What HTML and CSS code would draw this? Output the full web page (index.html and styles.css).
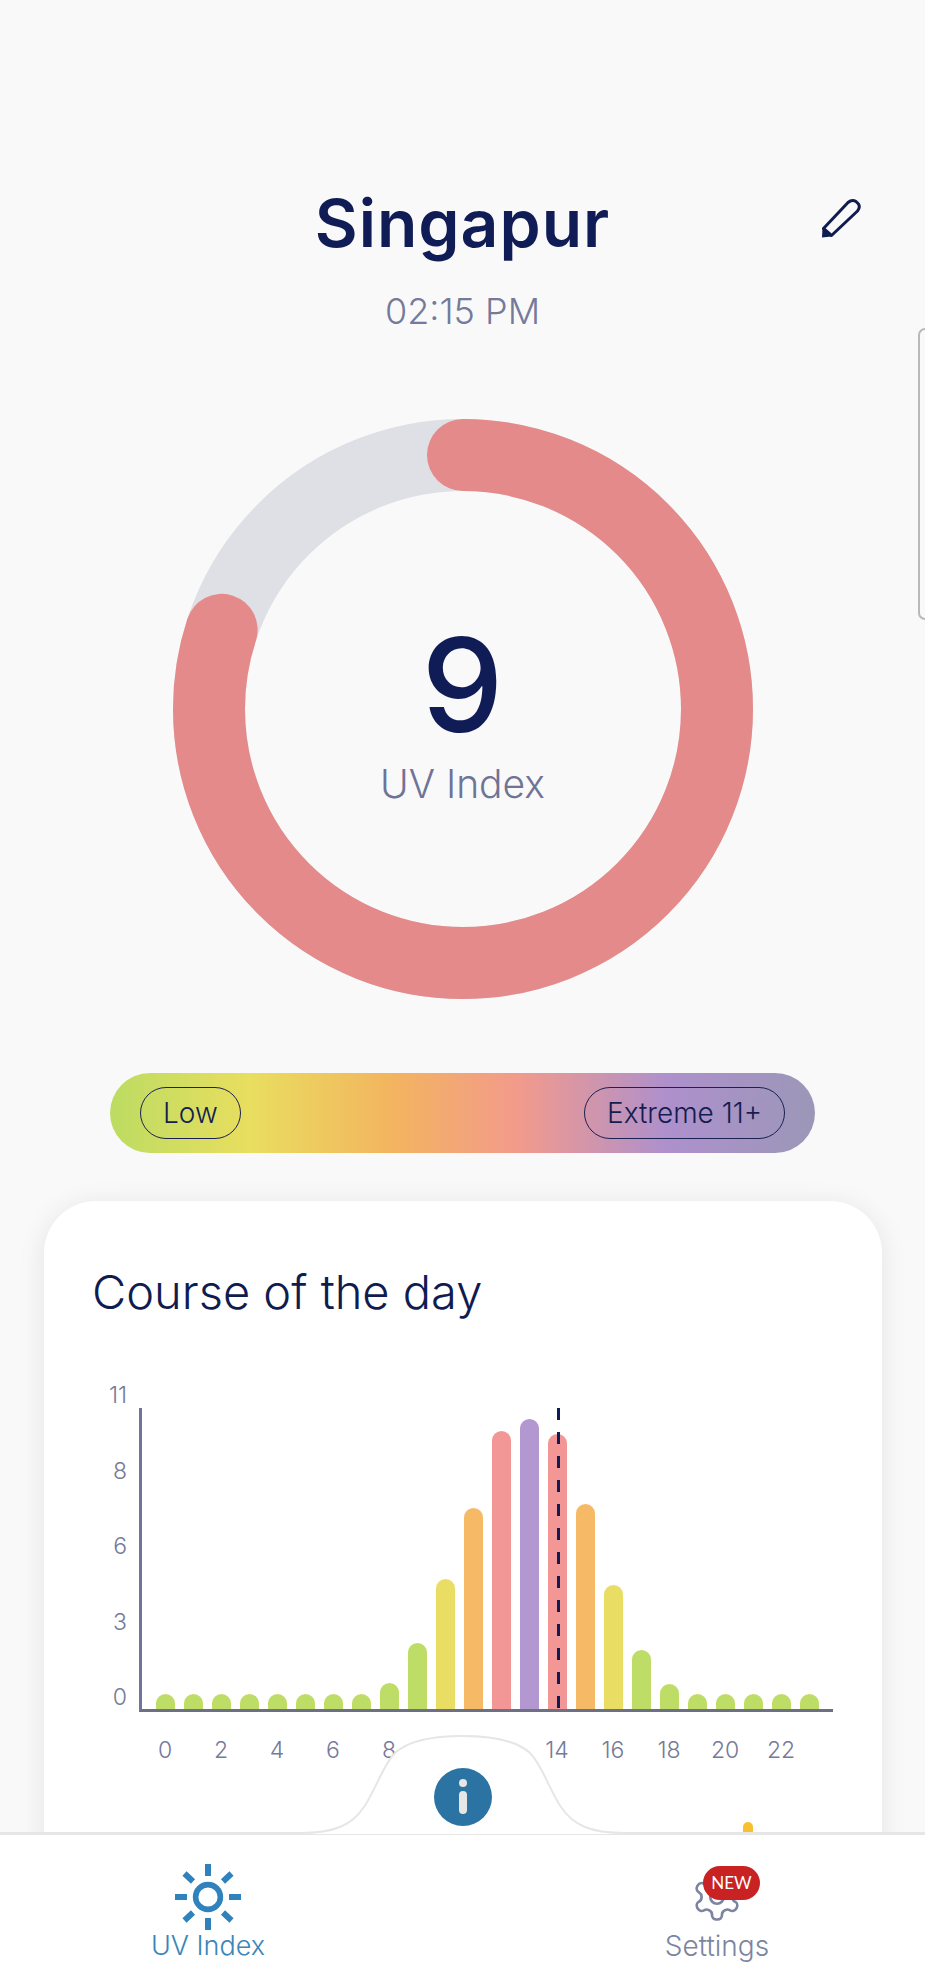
FILE: index.html
```html
<!DOCTYPE html>
<html lang="en">
<head>
  <meta charset="UTF-8">
  <meta name="viewport" content="width=device-width, initial-scale=1">
  <title>UV Index - Singapur</title>
  <link rel="stylesheet" href="styles.css">
</head>
<body>
  <div class="edge-handle"></div>

  <main class="screen">
    <header class="location">
      <h1 class="city">Singapur</h1>
      <svg class="edit-icon" viewBox="0 0 40 40" aria-hidden="true">
        <path class="pencil-body" d="M2.5 30.5 L27 4.5 Q31 1 35 3.5 L37.5 6 Q39.5 9.5 36.5 13 L10.5 37.5 Z"/>
        <path class="pencil-tip" d="M1.5 30 L10.5 38.5 L1 39.5 Z"/>
      </svg>
      <p class="time">02:15 PM</p>
    </header>

    <!-- main gauge, 9 of 11 -->
    <section class="gauge">
      <svg class="gauge-ring" viewBox="0 0 582 582" aria-hidden="true">
        <circle class="gauge-track" cx="291" cy="291" r="254"/>
        <circle class="gauge-value" cx="291" cy="291" r="254"/>
      </svg>
      <div class="gauge-label">
        <span class="gauge-number">9</span>
        <span class="gauge-caption">UV Index</span>
      </div>
    </section>

    <section class="scale">
      <span class="scale-pill">Low</span>
      <span class="scale-pill">Extreme 11+</span>
    </section>

    <section class="card">
      <h2 class="card-title">Course of the day</h2>

      <div class="chart">
        <div class="y-labels">
          <span>11</span><span>8</span><span>6</span><span>3</span><span>0</span>
        </div>
        <div class="plot">
          <div class="bar green" style="height:15px"></div>
          <div class="bar green" style="height:15px"></div>
          <div class="bar green" style="height:15px"></div>
          <div class="bar green" style="height:15px"></div>
          <div class="bar green" style="height:15px"></div>
          <div class="bar green" style="height:15px"></div>
          <div class="bar green" style="height:15px"></div>
          <div class="bar green" style="height:15px"></div>
          <div class="bar green" style="height:26px"></div>
          <div class="bar green" style="height:66px"></div>
          <div class="bar yellow" style="height:130px"></div>
          <div class="bar orange" style="height:201px"></div>
          <div class="bar pink" style="height:278px"></div>
          <div class="bar purple" style="height:290px"></div>
          <div class="bar pink" style="height:275px"></div>
          <div class="bar orange" style="height:205px"></div>
          <div class="bar yellow" style="height:124px"></div>
          <div class="bar green" style="height:59px"></div>
          <div class="bar green" style="height:25px"></div>
          <div class="bar green" style="height:15px"></div>
          <div class="bar green" style="height:15px"></div>
          <div class="bar green" style="height:15px"></div>
          <div class="bar green" style="height:15px"></div>
          <div class="bar green" style="height:15px"></div>
          <div class="now-line"></div>
        </div>
      </div>

      <div class="x-labels">
        <span>0</span><span>2</span><span>4</span><span>6</span><span>8</span><span>10</span>
        <span>12</span><span>14</span><span>16</span><span>18</span><span>20</span><span>22</span>
      </div>

      <div class="sun-bar"></div>
    </section>
  </main>

  <nav class="tabbar">
    <svg class="tabbar-bump" viewBox="0 0 925 100" aria-hidden="true">
      <path d="M-2 98 H300 C335 98 352 90 364 72 C376 54 383 30 395 18 C408 6 430 1 462.5 1 C495 1 517 6 530 18 C542 30 549 54 561 72 C573 90 590 98 625 98 H927 V100 H-2 Z"/>
    </svg>

    <button class="info-btn" aria-label="Info">
      <span class="info-dot"></span>
      <span class="info-stem"></span>
    </button>

    <a class="tab active">
      <svg class="tab-icon" viewBox="0 0 68 68" aria-hidden="true">
        <circle class="sun-core" cx="34" cy="34" r="12.4"/>
        <path class="sun-rays" d="M34 1 V13 M34 55 V67 M1 34 H13 M55 34 H67 M10.5 10.5 L19 18.5 M49 18.5 L57.5 10.5 M10.5 57.5 L19 49.5 M49 49.5 L57.5 57.5"/>
      </svg>
      <span class="tab-label">UV Index</span>
    </a>

    <a class="tab">
      <span class="tab-icon-wrap">
        <svg class="tab-icon gear" viewBox="0 0 24 24" aria-hidden="true">
          <path d="M12.22 2h-.44a2 2 0 0 0-2 2v.18a2 2 0 0 1-1 1.73l-.43.25a2 2 0 0 1-2 0l-.15-.08a2 2 0 0 0-2.73.73l-.22.38a2 2 0 0 0 .73 2.73l.15.1a2 2 0 0 1 1 1.72v.51a2 2 0 0 1-1 1.74l-.15.09a2 2 0 0 0-.73 2.73l.22.38a2 2 0 0 0 2.73.73l.15-.08a2 2 0 0 1 2 0l.43.25a2 2 0 0 1 1 1.73V20a2 2 0 0 0 2 2h.44a2 2 0 0 0 2-2v-.18a2 2 0 0 1 1-1.73l.43-.25a2 2 0 0 1 2 0l.15.08a2 2 0 0 0 2.73-.73l.22-.39a2 2 0 0 0-.73-2.73l-.15-.08a2 2 0 0 1-1-1.74v-.5a2 2 0 0 1 1-1.74l.15-.09a2 2 0 0 0 .73-2.73l-.22-.38a2 2 0 0 0-2.73-.73l-.15.08a2 2 0 0 1-2 0l-.43-.25a2 2 0 0 1-1-1.73V4a2 2 0 0 0-2-2z"/>
          <circle cx="12" cy="12" r="3"/>
        </svg>
        <span class="badge">NEW</span>
      </span>
      <span class="tab-label">Settings</span>
    </a>
  </nav>
</body>
</html>
```

FILE: styles.css
```css
* {
  margin: 0;
  padding: 0;
  box-sizing: border-box;
  font-family: 'Inter', 'Liberation Sans', sans-serif;
}

body {
  position: relative;
  width: 925px;
  height: 1988px;
  overflow: hidden;
  background-color: #f9f9f9;
}

.edge-handle {
  position: absolute;
  top: 328px;
  right: 0;
  width: 7px;
  height: 292px;
  border: 2px solid #b9b9b9;
  border-right: none;
  border-radius: 8px 0 0 8px;
}

.screen {
  padding-top: 186px;
}

/* header */
.location {
  display: grid;
  grid-template-columns: 1fr auto 1fr;
  align-items: center;
}

.city {
  grid-column: 2;
  font-size: 66px;
  line-height: 74px;
  font-weight: 600;
  letter-spacing: 1px;
  color: #101c55;
}

.edit-icon {
  justify-self: end;
  width: 40px;
  height: 40px;
  margin: 0 64px 10px 0;
}

.pencil-body {
  fill: none;
  stroke: #101c50;
  stroke-width: 3;
  stroke-linejoin: round;
}

.pencil-tip {
  fill: #101c50;
}

.time {
  grid-column: 1 / -1;
  margin-top: 29px;
  text-align: center;
  font-size: 36px;
  line-height: 44px;
  font-weight: 300;
  color: #757a99;
}

/* gauge */
.gauge {
  position: relative;
  width: 582px;
  height: 582px;
  margin: 85px auto 0;
}

.gauge-ring {
  display: block;
  width: 100%;
  height: 100%;
  transform: rotate(-90deg);
}

.gauge-track,
.gauge-value {
  fill: none;
  stroke-width: 72;
}

.gauge-track {
  stroke: #dfe0e6;
}

.gauge-value {
  stroke: #e48a8a;
  stroke-linecap: round;
  stroke-dasharray: 1277 1596;
}

.gauge-label {
  position: absolute;
  top: 212px;
  left: 0;
  width: 100%;
  display: flex;
  flex-direction: column;
  align-items: center;
}

.gauge-number {
  font-size: 130px;
  line-height: 110px;
  font-weight: 500;
  color: #101c55;
}

.gauge-caption {
  margin-top: 21px;
  font-size: 39px;
  line-height: 46px;
  font-weight: 300;
  color: #6f7396;
}

/* colour scale */
.scale {
  display: flex;
  justify-content: space-between;
  align-items: center;
  width: 705px;
  height: 80px;
  margin: 73px 0 0 110px;
  padding: 0 30px;
  border-radius: 40px;
  background: linear-gradient(90deg, #bcdc62 0%, #e9de5f 20%, #f3b45f 40%, #f29a8c 58%, #ae90cc 79%, #9b97b8 100%);
}

.scale-pill {
  display: flex;
  align-items: center;
  height: 52px;
  padding: 0 22px;
  border: 1.5px solid #1b2152;
  border-radius: 26px;
  font-size: 28px;
  font-weight: 300;
  color: #141d50;
}

/* chart card */
.card {
  width: 838px;
  height: 787px;
  margin: 48px 0 0 44px;
  padding: 61px 49px 0;
  border-radius: 52px;
  background-color: #fff;
  box-shadow: 0 4px 28px rgba(0, 0, 0, 0.09);
}

.card-title {
  margin-left: -1px;
  font-size: 47px;
  line-height: 60px;
  font-weight: 300;
  color: #101c50;
}

.chart {
  display: flex;
  gap: 12px;
  margin-top: 86px;
}

.y-labels {
  display: flex;
  flex-direction: column;
  justify-content: space-between;
  align-items: flex-end;
  width: 34px;
  height: 332px;
  margin-top: -28px;
  font-size: 23px;
  line-height: 30px;
  font-weight: 300;
  color: #757a99;
}

.plot {
  position: relative;
  display: grid;
  grid-template-columns: repeat(24, 28px);
  align-items: end;
  justify-items: center;
  width: 694px;
  height: 304px;
  padding-left: 9px;
  border-left: 3px solid #71739b;
  border-bottom: 3px solid #6d6f85;
}

.bar {
  width: 19px;
  border-radius: 10px 10px 0 0;
}

.green { background-color: #bedd66; }
.yellow { background-color: #e9de63; }
.orange { background-color: #f6b966; }
.pink { background-color: #f29696; }
.purple { background-color: #b297d0; }

/* dashed marker over the bar of the current hour */
.now-line {
  position: absolute;
  top: 0;
  bottom: 0;
  left: 415px;
  width: 3px;
  background: repeating-linear-gradient(180deg, #101c55 0, #101c55 12px, transparent 12px, transparent 24px);
}

.x-labels {
  display: flex;
  margin: 23px 0 0 58px;
  font-size: 23px;
  line-height: 30px;
  font-weight: 300;
  color: #757a99;
}

.x-labels span {
  width: 56px;
  padding-right: 28px;
  text-align: center;
  white-space: nowrap;
}

.sun-bar {
  width: 10px;
  height: 30px;
  margin: 57px 0 0 650px;
  border-radius: 5px 5px 0 0;
  background-color: #f8c02e;
}

/* bottom navigation */
.tabbar {
  position: absolute;
  left: 0;
  right: 0;
  bottom: 0;
  height: 155px;
  display: flex;
  justify-content: space-between;
  padding: 0 128px;
  background-color: #fff;
}

.tabbar-bump {
  position: absolute;
  top: -98px;
  left: 0;
  width: 925px;
  height: 100px;
}

.tabbar-bump path {
  fill: #fff;
  stroke: #e6e6e6;
  stroke-width: 2;
}

.info-btn {
  position: absolute;
  top: -65px;
  left: 434px;
  width: 58px;
  height: 58px;
  border: none;
  border-radius: 50%;
  background-color: #2b73a3;
}

.info-dot,
.info-stem {
  position: absolute;
  left: 25px;
  width: 8px;
  background-color: #e6e6e6;
}

.info-dot {
  top: 11px;
  height: 8px;
  border-radius: 50%;
}

.info-stem {
  top: 23px;
  height: 23px;
  border-radius: 4px;
}

.tab {
  display: flex;
  flex-direction: column;
  align-items: center;
  width: 160px;
  padding-top: 30px;
  font-size: 28px;
  line-height: 36px;
  font-weight: 300;
  color: #7d84a0;
}

.tab.active {
  font-size: 27px;
  color: #3a86b8;
}

.tab-label {
  margin-top: -3px;
}

.tab-icon {
  display: block;
  width: 68px;
  height: 68px;
}

.sun-core {
  fill: none;
  stroke: #2f82bb;
  stroke-width: 5.6;
}

.sun-rays {
  fill: none;
  stroke: #2f82bb;
  stroke-width: 6;
}

.tab-icon-wrap {
  position: relative;
  display: block;
  width: 68px;
  height: 68px;
}

.gear {
  padding: 7px;
}

.gear path,
.gear circle {
  fill: none;
  stroke: #7d84a0;
  stroke-width: 1.2;
}

.badge {
  position: absolute;
  top: 3px;
  left: 20px;
  width: 57px;
  height: 34px;
  border-radius: 17px;
  background-color: #c82222;
  font-family: 'Lato', sans-serif;
  font-size: 17px;
  line-height: 34px;
  font-weight: 400;
  text-align: center;
  color: #fff;
}
```
